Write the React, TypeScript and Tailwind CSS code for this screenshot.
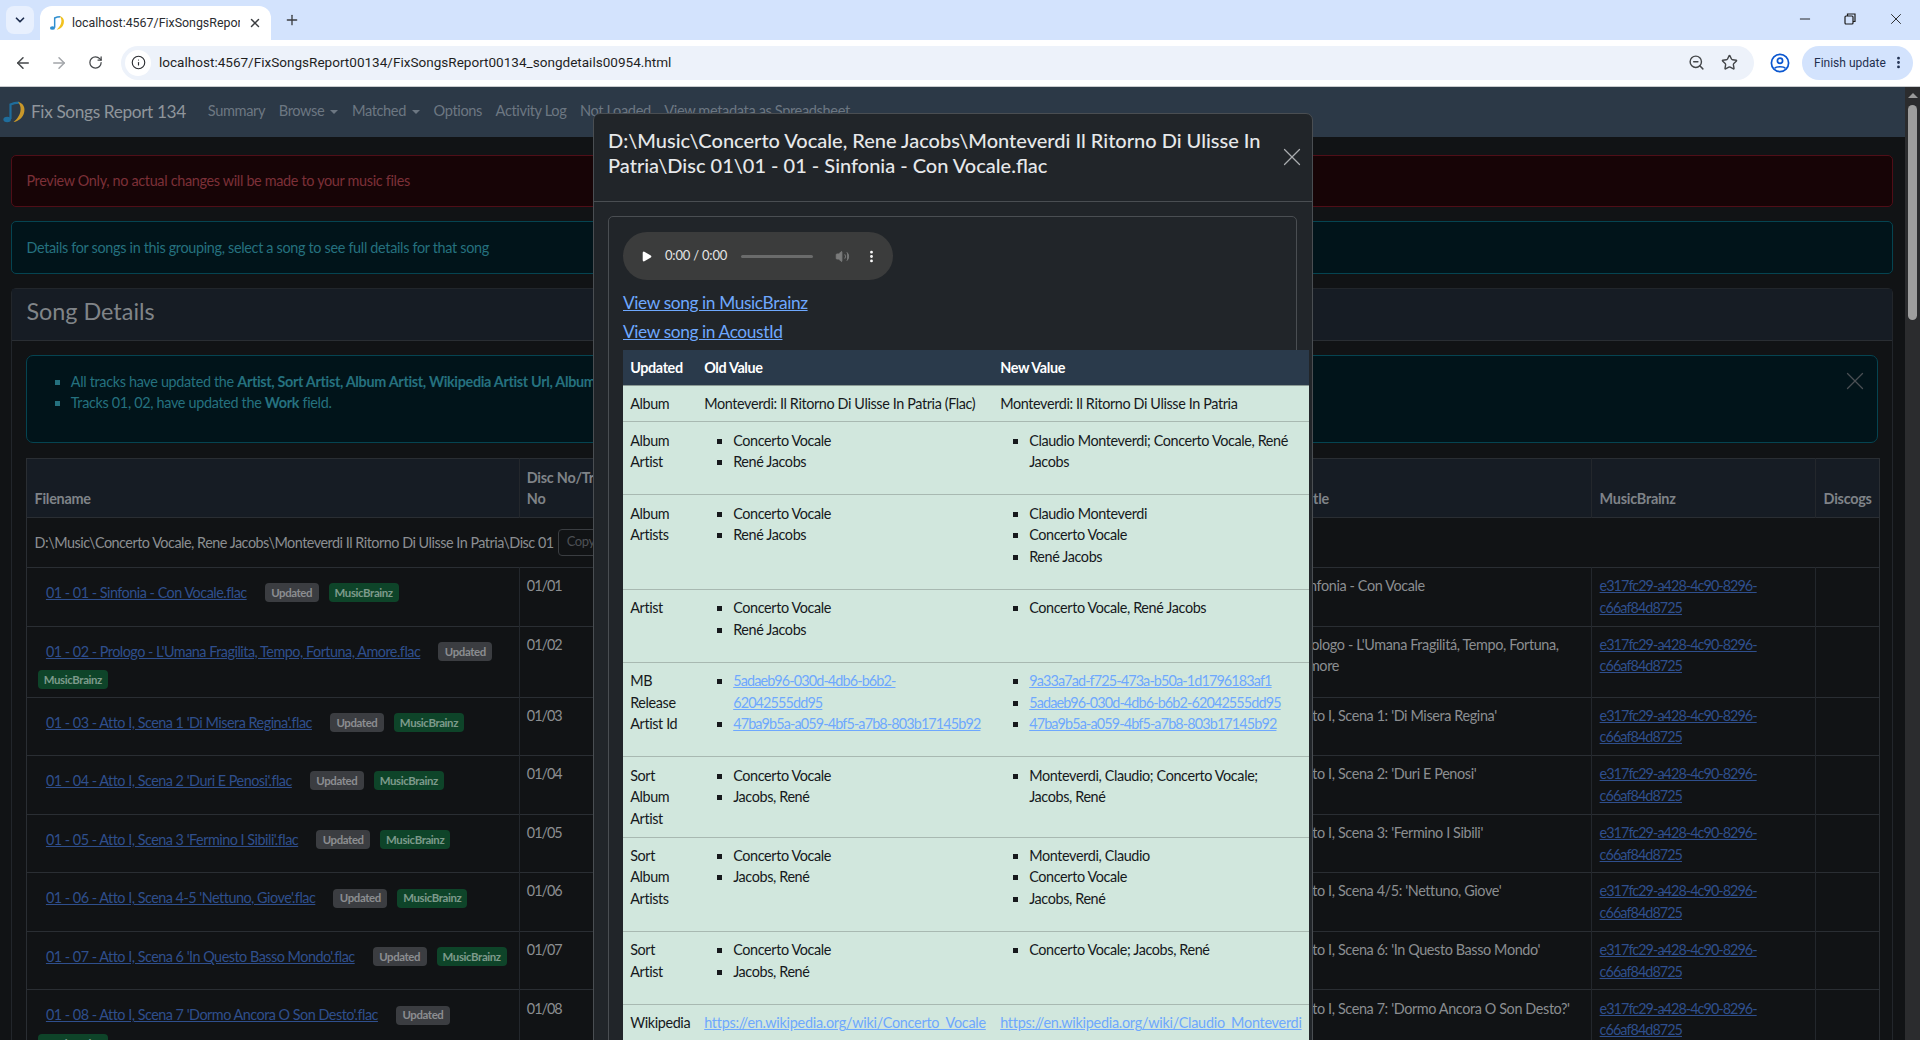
import React from 'react';
import { ArrowLeft, ArrowRight, ChevronDown, EllipsisVertical, Info, Minus, Play, Plus, RotateCw, Star, Volume2, X, ZoomOut } from 'lucide-react';

const FONT = 'font-["Lato","Liberation_Sans",sans-serif] tracking-[-0.38px]';

const songs = [
  { file: "01 - 01 - Sinfonia - Con Vocale.flac", no: '01/01', title: 'Sinfonia - Con Vocale' },
  { file: "01 - 02 - Prologo - L'Umana Fragilita, Tempo, Fortuna, Amore.flac", no: '01/02', title: "Prologo - L'Umana Fragilitá, Tempo, Fortuna, Amore" },
  { file: "01 - 03 - Atto I, Scena 1 'Di Misera Regina'.flac", no: '01/03', title: "Atto I, Scena 1: 'Di Misera Regina'" },
  { file: "01 - 04 - Atto I, Scena 2 'Duri E Penosi'.flac", no: '01/04', title: "Atto I, Scena 2: 'Duri E Penosi'" },
  { file: "01 - 05 - Atto I, Scena 3 'Fermino I Sibili'.flac", no: '01/05', title: "Atto I, Scena 3: 'Fermino I Sibili'" },
  { file: "01 - 06 - Atto I, Scena 4-5 'Nettuno, Giove'.flac", no: '01/06', title: "Atto I, Scena 4/5: 'Nettuno, Giove'" },
  { file: "01 - 07 - Atto I, Scena 6 'In Questo Basso Mondo'.flac", no: '01/07', title: "Atto I, Scena 6: 'In Questo Basso Mondo'" },
  { file: "01 - 08 - Atto I, Scena 7 'Dormo Ancora O Son Desto'.flac", no: '01/08', title: "Atto I, Scena 7: 'Dormo Ancora O Son Desto?'" },
];

// blue quaver with a yellow crescent on its right
function NoteIcon({ size, dim }: { size: number; dim?: boolean }) {
  const blue = dim ? '#1f6d9c' : '#2f8fd0';
  const yellow = dim ? '#c9982a' : '#f2c21f';
  return (
    <svg width={size} height={size} viewBox="0 0 24 24" fill="none">
      <path d="M8.5 19 V4.5 C11 3.2 14 2.6 17 2.6" stroke={blue} strokeWidth="2.2" />
      <ellipse cx="5.2" cy="19.5" rx="3.8" ry="2.8" fill={blue} />
      <path d="M16 2 C21.5 3 23.5 8 22 13 C20.8 17.5 16.5 21.5 11.5 22 C15.5 19 18.5 14 18.6 9.5 C18.7 6.5 17.8 4 16 2 Z" fill={yellow} />
    </svg>
  );
}

function ProfileIcon() {
  return (
    <svg width="20" height="20" viewBox="0 0 20 20" fill="none" stroke="#0b57d0" strokeWidth="1.7">
      <circle cx="10" cy="10" r="8.6" />
      <circle cx="10" cy="7.8" r="2.6" />
      <path d="M4.6 15.4 C6 13.2 14 13.2 15.4 15.4" />
    </svg>
  );
}

function BrowserChrome() {
  return (
    <div className="shrink-0 font-['Roboto',sans-serif] tracking-normal">
      <div className="h-10 bg-[#d3e3fd] flex items-end relative">
        <div className="ml-[6px] mb-[6px] w-7 h-7 rounded-lg bg-[#e8f0fe] flex items-center justify-center">
          <ChevronDown size={14} strokeWidth={3} className="text-[#1f2f4f]" />
        </div>
        <div className="ml-[6px] w-[231px] h-[34px] bg-white rounded-t-xl flex items-center pl-[9px] pr-2">
          <NoteIcon size={16} />
          <span className="ml-[7px] w-[168px] overflow-hidden whitespace-nowrap text-[12.4px] text-[#2a2c30]">localhost:4567/FixSongsReport00134</span>
          <X size={14} strokeWidth={2.5} className="ml-[8px] text-[#3b3d40]" />
        </div>
        <Plus size={16} strokeWidth={2} className="ml-[13px] mb-[12px] text-[#3b3d40]" />
        <div className="ml-auto mb-[12px] flex items-center gap-[30px] pr-[15px] text-[#1b1b1b]">
          <Minus size={16} strokeWidth={1.4} />
          <svg width="14" height="14" viewBox="0 0 14 14" fill="none" stroke="#1b1b1b" strokeWidth="1.2">
            <rect x="2" y="4" width="8" height="8" rx="1" />
            <path d="M4.5 4 V2 H12 V9.5 H10" />
          </svg>
          <X size={18} strokeWidth={1.2} />
        </div>
      </div>
      <div className="h-[47px] bg-white border-b border-[#c9cbce] flex items-center pb-px">
        <ArrowLeft size={18} strokeWidth={2} className="ml-[14px] text-[#44474a]" />
        <ArrowRight size={18} strokeWidth={2} className="ml-[18px] text-[#a2a5a9]" />
        <RotateCw size={15} strokeWidth={2} className="ml-[20px] text-[#44474a]" />
        <div className="ml-[18px] w-[1633px] h-[34px] rounded-full bg-[#edf2fa] flex items-center pl-[4px] pr-[16px]">
          <div className="w-[26px] h-[26px] rounded-full bg-white flex items-center justify-center">
            <Info size={15} strokeWidth={1.8} className="text-[#2a2c30]" />
          </div>
          <span className="ml-[8px] text-[13.55px] text-[#1f1f1f]">localhost:4567/FixSongsReport00134/FixSongsReport00134_songdetails00954.html</span>
          <ZoomOut size={17} strokeWidth={2} className="ml-auto text-[#44474a]" />
          <Star size={17} strokeWidth={2} className="ml-[16px] text-[#44474a]" />
        </div>
        <span className="ml-[16px]"><ProfileIcon /></span>
        <div className="ml-[12px] w-[111px] h-[34px] rounded-full bg-[#d3e3fd] flex items-center pl-[12px]">
          <span className="text-[12px] text-[#1f2f4f] whitespace-nowrap">Finish update</span>
          <EllipsisVertical size={15} strokeWidth={2.5} className="ml-[5px] text-[#1f2f4f]" />
        </div>
      </div>
    </div>
  );
}

function NavBar() {
  const caret = <span className="ml-[6px] inline-block border-x-[4px] border-t-[4px] border-x-transparent border-t-[#6c7782] align-middle" />;
  return (
    <div className="h-[50px] bg-[#2c3947] flex items-center pl-[2px] text-[14.6px] text-[#6c7782] whitespace-nowrap">
      <NoteIcon size={24} dim />
      <span className="ml-[5px] text-[17.3px] text-[#8f959b]">Fix Songs Report 134</span>
      <div className="ml-[22px] flex gap-[13.6px] -mt-[3px]">
        <span>Summary</span>
        <span>Browse{caret}</span>
        <span>Matched{caret}</span>
        <span>Options</span>
        <span>Activity Log</span>
        <span>Not Loaded</span>
        <span>View metadata as Spreadsheet</span>
      </div>
    </div>
  );
}

function Badge({ label, green }: { label: string; green?: boolean }) {
  return (
    <span className={`inline-flex items-center justify-center h-[19px] rounded-[4px] text-[11.4px] font-bold ${green ? 'w-[70px] bg-[#0e4429] text-[#7d9a8b]' : 'w-[54px] mr-[10px] bg-[#3b3d41] text-[#8b8d90]'}`}>
      {label}
    </span>
  );
}

function SongTable() {
  return (
    <table className="w-[1853px] table-fixed border-collapse text-[14.4px] leading-[21.6px] text-[#8b8e91]">
      <colgroup>
        <col className="w-[493px]" />
        <col className="w-[112px]" />
        <col className="w-[659px]" />
        <col className="w-[301px]" />
        <col className="w-[224px]" />
        <col className="w-[64px]" />
      </colgroup>
      <thead className="bg-[#161c24] font-bold text-[#7f8388] tracking-[-0.25px]">
        <tr className="border border-[#2a2e33]">
          <th className="p-[7.2px] align-bottom text-left border-r border-[#23272c]">Filename</th>
          <th className="p-[7.2px] pl-[6.4px] align-bottom text-left border-r border-[#23272c]">Disc No/Track No</th>
          <th className="p-[7.2px] align-bottom text-left border-r border-[#23272c]">Artist</th>
          <th className="p-[7.2px] pl-[10px] align-bottom text-left border-r border-[#23272c]">Title</th>
          <th className="p-[7.2px] align-bottom text-left border-r border-[#23272c]">MusicBrainz</th>
          <th className="p-[7.2px] align-bottom text-left">Discogs</th>
        </tr>
      </thead>
      <tbody>
        <tr className="border border-[#2a2e33]">
          <td colSpan={6} className="px-[7.2px] h-[50px]">
            <div className="flex items-center whitespace-nowrap">
              <span className="tracking-[-0.49px]">D:\Music\Concerto Vocale, Rene Jacobs\Monteverdi Il Ritorno Di Ulisse In Patria\Disc 01</span>
              <span className="ml-[4px] h-[27px] w-[60px] rounded-[4px] border border-[#3a3d41] text-[#4d5054] pl-[8px] text-[13px] leading-[22px]">Copy</span>
            </div>
          </td>
        </tr>
        {songs.map((s) => (
          <tr key={s.no} className="border border-[#2a2e33]">
            <td className="pt-[14px] pr-[7.2px] pb-[7.5px] pl-[10.5px] align-top border-r border-[#23272c]">
              <div className="flex flex-wrap items-center gap-y-[8px]">
                <a className="ml-[8px] mr-[18px] text-[#2f4f8d] underline tracking-[-0.5px]">{s.file}</a>
                <Badge label="Updated" />
                <Badge label="MusicBrainz" green />
              </div>
            </td>
            <td className="p-[7.2px] pl-[6.4px] align-top border-r border-[#23272c] tracking-[-1px]">{s.no}</td>
            <td className="p-[7.2px] align-top border-r border-[#23272c]">Concerto Vocale, René Jacobs</td>
            <td className="p-[7.2px] align-top border-r border-[#23272c]">{s.title}</td>
            <td className="p-[7.2px] align-top border-r border-[#23272c]">
              <a className="text-[#2f4f8d] underline tracking-[-0.95px]">e317fc29-a428-4c90-8296-c66af84d8725</a>
            </td>
            <td className="p-[7.2px]"></td>
          </tr>
        ))}
      </tbody>
    </table>
  );
}

function Bullets({ items, links, narrow }: { items: string[]; links?: boolean; narrow?: boolean }) {
  return (
    <ul className={`list-[square] pl-[29px] mb-[14.4px] ${narrow ? 'pr-[2.5px]' : ''}`}>
      {items.map((t) => (
        <li key={t}>{links ? <a className="text-[#6ea8fe] underline tracking-[-0.87px]">{t}</a> : t}</li>
      ))}
    </ul>
  );
}

const changes = [
  { name: 'Album Artist', old: ['Concerto Vocale', 'René Jacobs'], next: ['Claudio Monteverdi; Concerto Vocale, René Jacobs'] },
  { name: 'Album Artists', old: ['Concerto Vocale', 'René Jacobs'], next: ['Claudio Monteverdi', 'Concerto Vocale', 'René Jacobs'] },
  { name: 'Artist', old: ['Concerto Vocale', 'René Jacobs'], next: ['Concerto Vocale, René Jacobs'] },
  { name: 'MB Release Artist Id', links: true, old: ['5adaeb96-030d-4db6-b6b2-62042555dd95', '47ba9b5a-a059-4bf5-a7b8-803b17145b92'], next: ['9a33a7ad-f725-473a-b50a-1d1796183af1', '5adaeb96-030d-4db6-b6b2-62042555dd95', '47ba9b5a-a059-4bf5-a7b8-803b17145b92'] },
  { name: 'Sort Album Artist', old: ['Concerto Vocale', 'Jacobs, René'], next: ['Monteverdi, Claudio; Concerto Vocale; Jacobs, René'] },
  { name: 'Sort Album Artists', old: ['Concerto Vocale', 'Jacobs, René'], next: ['Monteverdi, Claudio', 'Concerto Vocale', 'Jacobs, René'] },
  { name: 'Sort Artist', old: ['Concerto Vocale', 'Jacobs, René'], next: ['Concerto Vocale; Jacobs, René'] },
];

function ChangesTable() {
  return (
    <table className="w-[686px] table-fixed border-collapse text-[14.4px] leading-[21.6px] text-[#16191c]">
      <colgroup>
        <col className="w-[74px]" />
        <col className="w-[296px]" />
        <col className="w-[316px]" />
      </colgroup>
      <thead className="bg-[#2a3a4b] text-white font-bold text-left border-b border-[#8b9a94]">
        <tr>
          <th className="px-[7.2px] py-[6.6px]">Updated</th>
          <th className="px-[7.2px] py-[6.6px]">Old Value</th>
          <th className="px-[7.2px] py-[6.6px]">New Value</th>
        </tr>
      </thead>
      <tbody className="bg-[#d1e7dd]">
        <tr className="border-b border-[#a8b9b1]">
          <td className="px-[7.2px] py-[7px]">Album</td>
          <td className="px-[7.2px] py-[7px]">Monteverdi: Il Ritorno Di Ulisse In Patria (Flac)</td>
          <td className="px-[7.2px] py-[7px]">Monteverdi: Il Ritorno Di Ulisse In Patria</td>
        </tr>
        {changes.map((c) => (
          <tr key={c.name} className="border-b border-[#a8b9b1]">
            <td className="p-[7.2px] align-top">{c.name}</td>
            <td className="p-[7.2px] align-top"><Bullets items={c.old} links={c.links} narrow /></td>
            <td className="p-[7.2px] align-top"><Bullets items={c.next} links={c.links} /></td>
          </tr>
        ))}
        <tr>
          <td className="p-[7.2px]">Wikipedia</td>
          <td className="p-[7.2px] whitespace-nowrap tracking-[-0.26px]"><a className="text-[#6ea8fe] underline">https://en.wikipedia.org/wiki/Concerto_Vocale</a></td>
          <td className="p-[7.2px] whitespace-nowrap tracking-[-0.26px]"><a className="text-[#6ea8fe] underline">https://en.wikipedia.org/wiki/Claudio_Monteverdi</a></td>
        </tr>
      </tbody>
    </table>
  );
}

function SongModal() {
  return (
    <div className="absolute left-[593px] top-[113px] w-[720px] h-[940px] bg-[#212529] border border-[#4a4e52] rounded-[7px] text-[#dee2e6]">
      <div className="h-[88px] border-b border-[#4a4e52] pl-[14px] pr-[10px] pt-[14px] flex">
        <h5 className="w-[665px] text-[20px] leading-[25px] font-medium text-[#e6e8ea] tracking-normal">
          D:\Music\Concerto Vocale, Rene Jacobs\Monteverdi Il Ritorno Di Ulisse In Patria\Disc 01\01 - 01 - Sinfonia - Con Vocale.flac
        </h5>
        <X size={30} strokeWidth={1} className="ml-auto mt-[14px] -mr-[5px] text-[#a9acaf]" />
      </div>
      <div className="ml-[14px] mt-[14px] w-[689px] h-[900px] border border-[#4a4e52] rounded-[5px] pl-[14px] pt-[15px]">
        <div className="w-[270px] h-[48px] rounded-full bg-[#3b3c3c] flex items-center pl-[17px] text-[#e4e4e4]">
          <Play size={13} fill="#ffffff" strokeWidth={0} />
          <span className="ml-[12px] text-[13px] tracking-[-0.2px]">0:00 / 0:00</span>
          <span className="ml-[14px] w-[72px] h-[3px] rounded bg-[#6a6b6b]" />
          <Volume2 size={15} fill="#7a7b7b" strokeWidth={1.5} className="ml-[22px] text-[#7a7b7b]" />
          <EllipsisVertical size={15} strokeWidth={2.5} className="ml-[14px] text-white" />
        </div>
        <div className="mt-[11px] text-[17.3px] leading-[24px] text-[#6ea8fe]">
          <div className="h-[29px]"><a className="underline">View song in MusicBrainz</a></div>
          <div className="h-[24px]"><a className="underline">View song in AcoustId</a></div>
        </div>
        <div className="mt-[6px]"><ChangesTable /></div>
      </div>
    </div>
  );
}

export default function App() {
  return (
    <div className={`relative h-[1040px] w-[1920px] overflow-hidden flex flex-col bg-[#111315] ${FONT}`}>
      <BrowserChrome />
      <div className="flex flex-1 min-h-0">
        <div className="w-[1905px] min-w-0">
          <NavBar />
          <div className="pl-[11px] pr-3 pt-[18px] flex flex-col">
            <div className="h-[52px] rounded-[5px] border border-[#4f0e17] bg-[#170406] text-[#7c3038] text-[14.4px] tracking-[-0.32px] flex items-center pl-[14.4px]">
              Preview Only, no actual changes will be made to your music files
            </div>
            <div className="mt-[14px] h-[53px] rounded-[5px] border border-[#054451] bg-[#01141a] text-[#25717f] text-[14.4px] tracking-[-0.32px] flex items-center pl-[14.4px]">
              Details for songs in this grouping, select a song to see full details for that song
            </div>
            <div className="mt-[14px] rounded-[5px] border border-[#22262b]">
              <div className="h-[52px] bg-[#161c24] border-b border-[#2a2e33] flex items-center pb-[6px] pl-[14.4px] text-[23.4px] text-[#808488] tracking-normal">Song Details</div>
              <div className="px-[14.4px] pt-[14.4px]">
                <div className="relative h-[88px] rounded-[7px] border border-[#054451] bg-[#01141a] text-[#25717f] text-[14.4px] tracking-[-0.32px] leading-[21.6px] pt-[14.4px] pl-[29px]">
                  <ul className="list-[square] pl-[14.4px]">
                    <li>All tracks have updated the <b>Artist, Sort Artist, Album Artist, Wikipedia Artist Url, Album Artists</b> fields.</li>
                    <li>Tracks 01, 02, have updated the <b>Work</b> field.</li>
                  </ul>
                  <X size={30} strokeWidth={1} className="absolute right-[7px] top-[10px] text-[#4a4f53]" />
                </div>
                <div className="mt-[15px]"><SongTable /></div>
              </div>
            </div>
          </div>
        </div>
        <div className="w-[15px] bg-[#2b2c2e] relative">
          <div className="mx-auto mt-[6px] w-0 h-0 border-x-[5px] border-b-[5px] border-x-transparent border-b-[#9a9a9a]" />
          <div className="mx-auto mt-[7px] w-[9px] h-[215px] rounded-full bg-[#9e9e9e]" />
        </div>
      </div>
      <SongModal />
    </div>
  );
}
